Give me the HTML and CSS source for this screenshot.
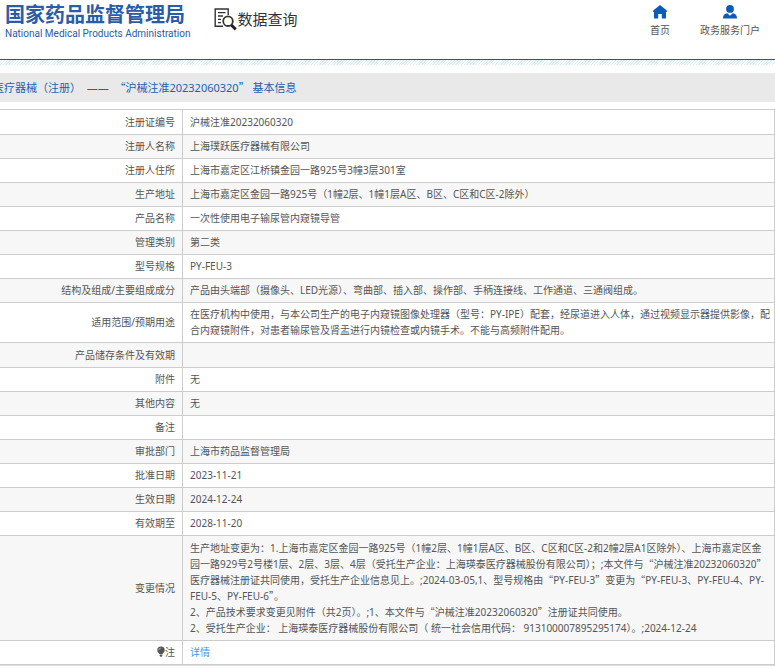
FILE: index.html
```html
<!DOCTYPE html>
<html lang="zh-CN">
<head>
<meta charset="utf-8">
<title>国家药品监督管理局 数据查询</title>
<link rel="stylesheet" href="styles.css">
</head>
<body>
<header class="site-header">
  <div class="brand">
    <div class="brand-name">国家药品监督管理局</div>
    <div class="brand-sub">National Medical Products Administration</div>
  </div>
  <div class="section-name">
    <svg class="query-icon" viewBox="0 0 23 23" aria-hidden="true">
      <path d="M9 18.200H1.200V1H14.200V7" fill="none" stroke="#333" stroke-width="1.400"/>
      <path d="M4 4.700h7.500M4 8h5M4 11.300h3M4 14.600h3" fill="none" stroke="#333" stroke-width="1.300"/>
      <circle cx="14" cy="13.200" r="4.800" fill="none" stroke="#333" stroke-width="1.800"/>
      <path d="M17.300 17l4.500 4.300" fill="none" stroke="#222" stroke-width="3"/>
    </svg>
    <span>数据查询</span>
  </div>
  <nav class="site-nav">
    <a href="#">
      <svg viewBox="0 0 14 14" aria-hidden="true"><path d="M7 0l6.800 5.500V7H13v6.500H8.800V9H5.200v4.500H1V7H.2V5.500z" fill="#0b5cb8"/></svg>
      <span>首页</span>
    </a>
    <a href="#">
      <svg viewBox="0 0 14 14" aria-hidden="true"><circle cx="7" cy="3.900" r="3.900" fill="#0b5cb8"/><path d="M0 13.500c0-3.500 1.500-5 4.300-5.300L7 10.800l2.700-2.600c2.800.3 4.300 1.800 4.300 5.300z" fill="#0b5cb8"/></svg>
      <span>政务服务门户</span>
    </a>
  </nav>
</header>
<main>
  <h1 class="title-bar"><span>医疗器械（注册）&nbsp; —— &nbsp;<q>沪械注准20232060320</q>&nbsp;基本信息</span></h1>
  <table class="info">
    <tbody>
      <tr class="roomy"><th scope="row">注册证编号</th><td>沪械注准20232060320</td></tr>
      <tr><th scope="row">注册人名称</th><td>上海璞跃医疗器械有限公司</td></tr>
      <tr><th scope="row">注册人住所</th><td>上海市嘉定区江桥镇金园一路925号3幢3层301室</td></tr>
      <tr><th scope="row">生产地址</th><td>上海市嘉定区金园一路925号（1幢2层、1幢1层A区、B区、C区和C区-2除外）</td></tr>
      <tr><th scope="row">产品名称</th><td>一次性使用电子输尿管内窥镜导管</td></tr>
      <tr><th scope="row">管理类别</th><td>第二类</td></tr>
      <tr><th scope="row">型号规格</th><td>PY-FEU-3</td></tr>
      <tr><th scope="row">结构及组成/主要组成成分</th><td>产品由头端部（摄像头、LED光源）、弯曲部、插入部、操作部、手柄连接线、工作通道、三通阀组成。</td></tr>
      <tr><th scope="row">适用范围/预期用途</th><td>在医疗机构中使用，与本公司生产的电子内窥镜图像处理器（型号：PY-IPE）配套，经尿道进入人体，通过视频显示器提供影像，配合内窥镜附件，对患者输尿管及肾盂进行内镜检查或内镜手术。不能与高频附件配用。</td></tr>
      <tr class="roomy"><th scope="row">产品储存条件及有效期</th><td></td></tr>
      <tr><th scope="row">附件</th><td>无</td></tr>
      <tr><th scope="row">其他内容</th><td>无</td></tr>
      <tr><th scope="row">备注</th><td></td></tr>
      <tr><th scope="row">审批部门</th><td>上海市药品监督管理局</td></tr>
      <tr><th scope="row">批准日期</th><td>2023-11-21</td></tr>
      <tr><th scope="row">生效日期</th><td>2024-12-24</td></tr>
      <tr><th scope="row">有效期至</th><td>2028-11-20</td></tr>
      <tr class="roomy"><th scope="row">变更情况</th><td>生产地址变更为：1.上海市嘉定区金园一路925号（1幢2层、1幢1层A区、B区、C区和C区-2和2幢2层A1区除外）、上海市嘉定区金<br>园一路929号2号楼1层、2层、3层、4层（受托生产企业：上海瑛泰医疗器械股份有限公司）；;本文件与<q>沪械注准20232060320</q><br>医疗器械注册证共同使用，受托生产企业信息见上。;2024-03-05,1、型号规格由<q>PY-FEU-3</q>变更为<q>PY-FEU-3、PY-FEU-4、PY-<br>FEU-5、PY-FEU-6</q>。<br>2、产品技术要求变更见附件（共2页）。;1、本文件与<q>沪械注准20232060320</q>注册证共同使用。<br>2、受托生产企业： 上海瑛泰医疗器械股份有限公司（ 统一社会信用代码： 913100007895295174）。;2024-12-24</td></tr>
      <tr><th scope="row"><svg class="bulb" viewBox="0 0 8 11" aria-hidden="true"><path d="M4 .5a3.700 3.700 0 0 1 3.700 3.700C7.700 6 6 6.800 5.500 8.200h-3C2 6.800.3 6 .3 4.200A3.700 3.700 0 0 1 4 .5zM2.700 8.800h2.600v1L4.700 10.700H3.300l-.6-.9z" fill="#555"/><path d="M1.800 4.200A2.200 2.200 0 0 1 4 2" fill="none" stroke="#ccc" stroke-width=".7"/></svg>注</th><td><a class="detail" href="#">详情</a></td></tr>
    </tbody>
  </table>
</main>
</body>
</html>
```
FILE: styles.css
```css
* { box-sizing: border-box; }
body {
  margin: 0;
  background: #fff;
  color: #555;
  font: 10px/16px "Noto Sans", "Noto Sans CJK SC", sans-serif;
  overflow-x: hidden;
}
a { color: inherit; text-decoration: none; }
svg { display: block; }

.site-header {
  display: flex;
  align-items: flex-start;
  height: 65px;
  padding: 4px 15px 0 5px;
  position: relative;
}
/* blue rule with a hatched strip beneath it */
.site-header::after {
  content: "";
  position: absolute;
  left: 0;
  right: 0;
  bottom: 0;
  height: 5px;
  border-top: 1px solid #1c5a9c;
  background: repeating-linear-gradient(135deg, #fff 0 1px, #dcecf8 1px 2px) padding-box;
}
.brand { color: #2b5ca8; white-space: nowrap; }
.brand-name { font-size: 20px; line-height: 22px; font-weight: 700; }
.brand-sub { font: 400 10px/16px Roboto, sans-serif; }
.section-name {
  display: flex;
  align-items: center;
  margin: 3px 0 0 24px;
  color: #333;
  font-size: 15px;
  line-height: 24px;
}
.query-icon { width: 23px; height: 23px; }
.site-nav { display: flex; gap: 30px; margin-left: auto; }
.site-nav a {
  display: flex;
  flex-direction: column;
  align-items: center;
  gap: 3px;
}
.site-nav svg { width: 14px; height: 14px; margin-top: 1px; }

q { quotes: "“" "”"; }
q::before, q::after { font-family: "Noto Sans CJK SC", sans-serif; }

.title-bar {
  margin: 8px 0 7px;
  padding: 6px 0;
  background: #e9e9e9;
  color: #1d5fb4;
  font-size: 11px;
  line-height: 16px;
  font-weight: 400;
  white-space: nowrap;
  overflow: hidden;
}
.title-bar span { display: block; margin-left: -7px; }

.info {
  width: 100%;
  border-collapse: separate;
  border-spacing: 0;
  border-top: 1px solid #ccc;
  border-right: 1px solid #ccc;
  border-bottom: 1px solid #ddd;
}
.info tr { height: 24px; }
.info tr:nth-child(even) { background: #f7f7f7; }
.info th, .info td {
  padding: 3px 0 4px 7px;
  border-bottom: 1px solid #ccc;
  vertical-align: middle;
}
.info th {
  width: 183px;
  padding-right: 7px;
  border-right: 1px solid #ccc;
  font-weight: 400;
  text-align: right;
}
.info .roomy th, .info .roomy td { padding-top: 4px; }
.info tr.roomy { height: 25px; }
.bulb { display: inline-block; width: 8px; height: 11px; vertical-align: -1px; }
.detail { color: #3f97f0; }
```
